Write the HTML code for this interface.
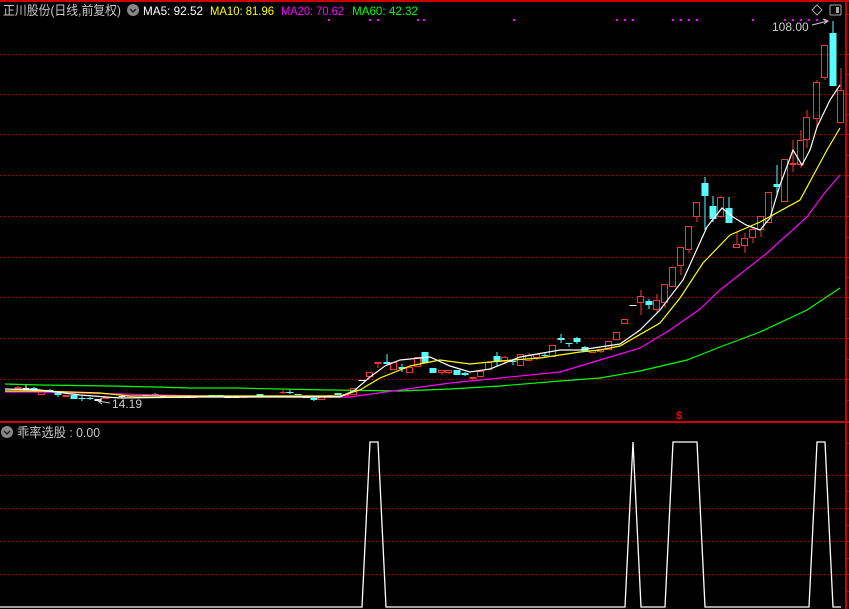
<!DOCTYPE html>
<html><head><meta charset="utf-8"><style>
html,body{margin:0;padding:0;background:#000;width:849px;height:609px;overflow:hidden}
svg{display:block}
text{font-family:"Liberation Sans","Noto Sans CJK SC",sans-serif}
</style></head><body>
<svg id="s" width="849" height="609" xmlns="http://www.w3.org/2000/svg">
<rect width="849" height="609" fill="#000"/>
<line x1="0" y1="1" x2="849" y2="1" stroke="#c00" stroke-width="2"/>
<g stroke="#b00" stroke-width="1" stroke-dasharray="1,3">
<line x1="0" y1="54.5" x2="845" y2="54.5"/><line x1="0" y1="94.5" x2="845" y2="94.5"/>
<line x1="0" y1="134.5" x2="845" y2="134.5"/><line x1="0" y1="175.5" x2="845" y2="175.5"/>
<line x1="0" y1="216.5" x2="845" y2="216.5"/><line x1="0" y1="257.5" x2="845" y2="257.5"/>
<line x1="0" y1="297.5" x2="845" y2="297.5"/><line x1="0" y1="338.5" x2="845" y2="338.5"/>
<line x1="0" y1="379.5" x2="845" y2="379.5"/>
<line x1="0" y1="475.5" x2="845" y2="475.5"/><line x1="0" y1="508.5" x2="845" y2="508.5"/>
<line x1="0" y1="541.5" x2="845" y2="541.5"/><line x1="0" y1="574.5" x2="845" y2="574.5"/>
</g>
<line x1="0" y1="422" x2="849" y2="422" stroke="#c00" stroke-width="2"/>
<line x1="846" y1="0" x2="846" y2="609" stroke="#c00" stroke-width="2"/>
<g id="ticks" stroke="#c00"></g>
<g id="c"></g>
<g fill="none" stroke-width="1.2">
<polyline stroke="#0f0" points="5,384 40,385 110,386 155,387 190,388 235,388 280,389 330,390 400,391 450,389 500,386 560,381 600,378 640,371 687,360 720,347 760,332 807,310 840,288"/>
<polyline stroke="#f0f" points="5,392 40,392 120,394 200,396 300,397 350,397 400,390 450,383 500,378 560,372 610,357 640,348 670,330 700,309 720,290 767,253 807,217 823,195 840,175"/>
<polyline stroke="#ff0" points="5,391 40,391 100,393 130,396 200,396 340,396 360,390 380,378 410,366 440,360 470,364 500,361 540,358 580,352 600,350 620,346 660,323 680,298 703,263 730,235 760,222 800,200 827,150 840,128"/>
<polyline stroke="#fff" points="5,389 40,390 80,395 120,398 200,397 340,397 355,390 370,377 385,366 400,360 430,357 450,366 470,372 490,369 520,357 560,350 580,350 600,347 620,344 640,330 660,310 683,280 707,227 722,208 733,217 746,225 760,230 770,218 780,185 793,150 802,165 810,150 817,127 830,100 840,85"/>
</g>
<g id="dots" fill="#f0f"></g>
<text x="3" y="15" fill="#c8c8c8" font-size="13" textLength="118" lengthAdjust="spacingAndGlyphs">正川股份(日线,前复权)</text>
<circle cx="133" cy="10" r="6" fill="#888"/><path d="M130,9 l3,3 l3,-3" stroke="#222" stroke-width="1.5" fill="none"/>
<text x="143" y="15" fill="#fff" font-size="12" textLength="60" lengthAdjust="spacingAndGlyphs">MA5: 92.52</text>
<text x="210" y="15" fill="#ff0" font-size="12" textLength="64" lengthAdjust="spacingAndGlyphs">MA10: 81.96</text>
<text x="281" y="15" fill="#f0f" font-size="12" textLength="63" lengthAdjust="spacingAndGlyphs">MA20: 70.62</text>
<text x="352" y="15" fill="#0f0" font-size="12" textLength="66" lengthAdjust="spacingAndGlyphs">MA60: 42.32</text>
<path d="M812,10 l5,-5 l5,5 l-5,5z" stroke="#aaa" fill="none"/>
<rect x="830" y="5" width="11" height="10" rx="1" stroke="#aaa" fill="none"/><rect x="836" y="7" width="3" height="6" fill="#aaa"/>
<text x="772" y="31" fill="#ccc" font-size="12">108.00</text>
<path d="M812,25 L828,21 M823,19 l5,2 l-4,3" stroke="#ccc" fill="none"/>
<text x="112" y="408" fill="#ccc" font-size="12">14.19</text>
<path d="M110,403 L98,401 M102,398 l-4,3 l4,3" stroke="#ccc" fill="none"/>
<text x="676" y="419" fill="#f00" font-size="11" font-weight="bold">$</text>
<circle cx="7" cy="432" r="6" fill="#888"/><path d="M4,431 l3,3 l3,-3" stroke="#222" stroke-width="1.5" fill="none"/>
<text x="17" y="437" fill="#c8c8c8" font-size="13" textLength="83" lengthAdjust="spacingAndGlyphs">乖率选股 : 0.00</text>
<polyline fill="none" stroke="#fff" stroke-width="1.3" points="0,607 362,607 370,442 378,442 386,607 625,607 633,442 641,607 665,607 673,442 697,442 705,607 809,607 817,442 825,442 833,607 841,607"/>
</svg>
<script>
var NS="http://www.w3.org/2000/svg",g=document.getElementById('c');
function el(t,a,p){var e=document.createElementNS(NS,t);for(var k in a)e.setAttribute(k,a[k]);(p||g).appendChild(e);}
var C=[[18,387,389,386,390,'R'],[26,388,389,385,390,'w'],[34,388,390,387,391,'c'],[42,391,395,390,395,'r'],[50,390,392,389,393,'c'],[58,393,395,391,397,'c'],[66,395,397,395,397,'R'],[74,395,399,395,399,'c'],[82,398,399,396,401,'c'],[90,398,399,397,400,'c'],[98,399,401,399,401,'w'],[106,397,399,397,399,'R'],[114,397,398,397,398,'c'],[122,396,397,395,398,'w'],[130,396,397,396,397,'R'],[138,397,398,397,398,'w'],[146,395,396,395,396,'c'],[155,394,395,393,396,'c'],[163,396,397,396,397,'w'],[171,397,398,397,398,'R'],[179,397,398,397,398,'y'],[187,397,398,397,398,'w'],[195,397,398,397,398,'R'],[204,396,397,396,397,'R'],[212,395,396,395,396,'c'],[220,395,396,395,396,'c'],[228,397,398,397,398,'w'],[236,397,398,397,398,'y'],[244,397,398,397,398,'R'],[252,396,397,396,397,'R'],[260,394,396,394,396,'c'],[268,396,397,396,397,'w'],[276,396,397,396,397,'y'],[283,392,393,390,394,'r'],[290,392,393,390,394,'c'],[298,394,395,394,395,'c'],[306,397,398,397,398,'w'],[314,398,400,396,401,'c'],[322,396,400,396,400,'r'],[330,395,396,395,396,'R'],[338,393,395,393,395,'c'],[346,394,396,394,396,'R'],
[354,388,395,388,395,'r'],[362,380,381,380,381,'w'],[370,372,377,372,377,'r'],[378,362,364,362,368,'r'],[387,362,364,354,365,'c'],[394,362,370,361,370,'r'],[402,367,369,364,372,'c'],[410,367,373,367,373,'r'],[418,357,367,357,367,'r'],[425,352,363,352,363,'c'],[433,368,373,368,373,'c'],[442,370,373,370,375,'r'],[449,370,373,370,374,'r'],[457,370,375,370,375,'c'],[465,373,375,372,376,'c'],[473,377,379,377,379,'R'],[481,371,377,371,377,'r'],[489,362,370,362,370,'r'],[497,356,362,352,366,'c'],[505,357,362,356,364,'r'],[513,361,362,359,365,'c'],[521,354,366,354,366,'r'],[529,355,361,353,361,'r'],[537,354,358,354,360,'r'],[545,355,356,353,357,'c'],[553,345,357,345,357,'r'],[561,338,340,334,343,'c'],[569,343,344,343,347,'c'],[577,338,342,337,344,'c'],[585,347,351,346,352,'c'],[593,350,353,350,353,'r'],[601,349,352,349,353,'r'],[609,341,350,341,350,'r'],[617,332,340,332,340,'r'],[625,319,324,319,324,'r'],[633,305,306,305,306,'w'],[641,296,303,290,315,'r'],[649,301,305,299,309,'c'],[657,300,310,294,313,'r'],[665,284,303,284,308,'r'],[673,267,287,267,287,'r'],[681,247,266,247,275,'r'],[689,226,250,226,253,'r'],[697,202,217,202,222,'r'],[705,183,196,177,230,'c'],[713,206,219,196,222,'c'],[721,197,217,196,218,'r'],[729,208,223,197,223,'c'],[737,244,248,232,248,'r'],[745,238,246,233,253,'r'],[753,229,238,228,243,'r'],[761,216,230,216,237,'r'],[769,192,223,192,223,'r'],[777,184,187,165,195,'c'],[785,159,202,159,202,'r'],[793,163,165,140,172,'R'],[801,140,165,130,168,'r'],[807,117,140,110,148,'r'],[817,82,119,80,128,'r'],[825,45,78,45,80,'r'],[833,33,86,21,86,'c'],[841,90,123,68,123,'r']];
var col={r:'#f33',R:'#f33',c:'#5ff',w:'#fff',y:'#ff0'};
C.forEach(function(d){var x=d[0],c=col[d[5]];
el('line',{x1:x,y1:d[3],x2:x,y2:d[4],stroke:c,'stroke-width':1});
var h=Math.max(d[2]-d[1],1);
if(d[5]=='r'&&h>2)el('rect',{x:x-3.5,y:d[1]+.5,width:6,height:h-1,fill:'#000',stroke:c,'stroke-width':1});
else el('rect',{x:x-3.5,y:d[1],width:7,height:h,fill:c});});
var D=[329,370,378,418,424,514,617,625,633,673,681,689,697,753,785,793,801,809,817,825],dg=document.getElementById('dots');
D.forEach(function(x){el('rect',{x:x-1,y:19,width:2,height:2},dg);});
var T=document.getElementById('ticks');
[14,54,74,94,114,134,155,175,196,216,237,257,277,297,318,338,359,379,400,443,475,491,508,525,541,558,574,591].forEach(function(y){el('line',{x1:847,y1:y+.5,x2:849,y2:y+.5},T);});
</script>
</body></html>
